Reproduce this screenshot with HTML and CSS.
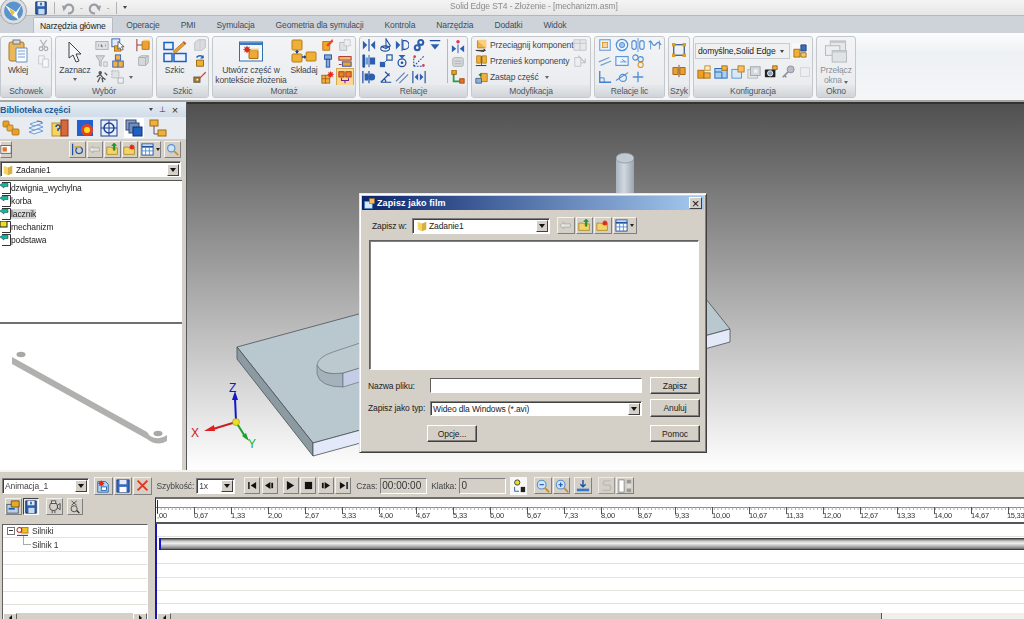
FILE: index.html
```html
<!DOCTYPE html>
<html lang="pl">
<head>
<meta charset="utf-8">
<title>Solid Edge ST4 - Złożenie - [mechanizm.asm]</title>
<link rel="stylesheet" href="styles.css">
</head>
<body>
<svg class="defs" aria-hidden="true">
<defs>
<symbol id="paste" viewBox="0 0 20 24"><rect x="1" y="3" width="15" height="19" rx="2" fill="#e8b85a" stroke="#a87a28"/><rect x="5" y="1" width="7" height="4" fill="#d8d8d8" stroke="#777"/><path d="M8 9h11v14H8z" fill="#f8fbff" stroke="#6f8fb8"/><path d="M10 12h7M10 15h7M10 18h7" stroke="#7aa0d0"/></symbol>
<symbol id="undo" viewBox="0 0 16 16"><path d="M4 9a5 5 0 1 1 4 5" fill="none" stroke="#9a9ea4" stroke-width="2.400"/><path d="M1 5l6 1-4 6z" fill="#9a9ea4"/></symbol>
<symbol id="cut" viewBox="0 0 16 16"><path d="M4 1l6 9M12 1L6 10" stroke="#b4b8bc" stroke-width="1.6" fill="none"/><circle cx="5" cy="12" r="2.3" fill="none" stroke="#a8acb0" stroke-width="1.5"/><circle cx="11" cy="12" r="2.3" fill="none" stroke="#a8acb0" stroke-width="1.5"/></symbol>
<symbol id="copy" viewBox="0 0 16 16"><path d="M2 1h7v10H2z" fill="#f2f3f4" stroke="#c0c4c8"/><path d="M7 5h7v10H7z" fill="#f6f7f8" stroke="#c0c4c8"/></symbol>
<symbol id="cursor" viewBox="0 0 14 22"><path d="M1 1v16l4-3 3 7 3-1-3-7h5z" fill="#f4f6f8" stroke="#3c4248"/></symbol>
<symbol id="selbox" viewBox="0 0 16 16"><rect x="1" y="4" width="14" height="9" fill="#dfe2e5" stroke="#a8acb0"/><path d="M4 7v3M7 7v3h2M12 7v3" stroke="#a0a4a8"/></symbol>
<symbol id="selcur" viewBox="0 0 16 16"><rect x="1" y="1" width="9" height="9" fill="#dfeaf8" stroke="#2f5faf"/><rect x="4" y="9" width="7" height="6" fill="#f0a828" stroke="#a86c10"/><path d="M8 4v9l2-2 2 3 2-1-2-3h3z" fill="#fff" stroke="#333" stroke-width=".8"/></symbol>
<symbol id="tee" viewBox="0 0 16 16"><path d="M1 1v14M1 8h6" stroke="#a04040" stroke-width="1.2"/><path d="M7 4h8v9H7z" fill="#f0a030" stroke="#b07010"/><path d="M7 4l2-2h7l-1 2z" fill="#f8cc70"/></symbol>
<symbol id="filter" viewBox="0 0 16 16"><path d="M1 2h10L7 8v6l-2-1V8z" fill="#d4d7da" stroke="#a6aaae"/><rect x="10" y="9" width="4" height="5" fill="#e4e6e8" stroke="#b4b8bc"/></symbol>
<symbol id="stack" viewBox="0 0 16 16"><rect x="5" y="1" width="6" height="6" fill="#f4b040" stroke="#2f5faf"/><rect x="2" y="8" width="12" height="7" fill="#f4b040" stroke="#2f5faf"/><path d="M8 8v7" stroke="#2f5faf"/></symbol>
<symbol id="grycube" viewBox="0 0 16 16"><path d="M3 4l3-2h8v8l-3 3H3z" fill="#d6d9dc" stroke="#a8acb0"/><path d="M3 4h8v9M11 4l3-2" fill="none" stroke="#a8acb0"/></symbol>
<symbol id="run" viewBox="0 0 16 16"><circle cx="6" cy="3" r="2" fill="#555"/><path d="M2 8l4-3 3 4 3 2M6 8l-3 6M8 9l1 5M11 3l3 3" stroke="#555" stroke-width="1.5" fill="none"/></symbol>
<symbol id="grybox" viewBox="0 0 16 16"><rect x="1" y="1" width="8" height="8" fill="#e0e3e6" stroke="#a8acb0" stroke-dasharray="2 1"/><rect x="8" y="9" width="6" height="6" fill="#f0f2f4" stroke="#a8acb0"/></symbol>
<symbol id="sketch" viewBox="0 0 24 22"><rect x="1" y="2" width="9" height="7" fill="#eaf2fc" stroke="#1c5fc0" stroke-width="1.5"/><rect x="1" y="13" width="8" height="8" fill="#eaf2fc" stroke="#1c5fc0" stroke-width="1.5"/><rect x="11" y="13" width="12" height="8" fill="#eaf2fc" stroke="#1c5fc0" stroke-width="1.5"/><path d="M10 11L21 1l2 2L12 13z" fill="#e8a030" stroke="#a06010" stroke-width=".6"/><path d="M21 1l2 2-1 1-2-2z" fill="#d04040"/></symbol>
<symbol id="grypart" viewBox="0 0 16 16"><path d="M2 5l4-3h8v9l-4 3H2z" fill="#dadde0" stroke="#b8bcc0"/><path d="M8 2v10" stroke="#c4c8cc"/></symbol>
<symbol id="sk2" viewBox="0 0 16 16"><path d="M4 7h8v7H4z" fill="#f0b030" stroke="#906010"/><path d="M4 4a5 5 0 0 1 8 0" fill="none" stroke="#1c5fc0" stroke-width="1.6"/><path d="M12 1v4H8z" fill="#1c5fc0"/></symbol>
<symbol id="sk3" viewBox="0 0 16 16"><rect x="1" y="8" width="7" height="6" fill="#b08028" stroke="#555"/><path d="M7 9l7-7 1 1-7 7z" fill="#d84040"/><circle cx="5" cy="11" r="1" fill="#fff"/></symbol>
<symbol id="window" viewBox="0 0 24 20"><rect x=".5" y=".5" width="23" height="19" fill="#f4f8fc" stroke="#2f6fb0"/><rect x="1" y="1" width="22" height="2.5" fill="#3a78c0"/><path d="M10 9h9v8h-9z" fill="#f0a830" stroke="#a87010"/><path d="M10 9l2-2h8l-1 2z" fill="#f8d080"/><path d="M8 4l1 2 2-1-1 2 2 1-2 1 1 2-2-1-1 2-1-2-2 1 1-2-2-1 2-1-1-2 2 1z" fill="#e02818"/></symbol>
<symbol id="assemble" viewBox="0 0 26 24"><rect x="1" y="1" width="10" height="10" rx="1" fill="#f0b038" stroke="#b87c10"/><rect x="1" y="15" width="10" height="8" rx="1" fill="#f0b038" stroke="#b87c10"/><rect x="15" y="13" width="10" height="9" rx="1" fill="#f0b038" stroke="#b87c10"/><path d="M6 11v3M11 18h4" stroke="#1c3f90" stroke-width="1.5"/><path d="M4 12h4l-2 3zM13 16v4l2-2z" fill="#1c3f90"/></symbol>
<symbol id="m1" viewBox="0 0 16 16"><path d="M2 4h8v10H2z" fill="#f0a828" stroke="#b87010"/><path d="M6 8l7-7 1 3-6 6z" fill="#e84828"/></symbol>
<symbol id="m2" viewBox="0 0 16 16"><rect x="2" y="5" width="8" height="9" fill="#e0e3e6" stroke="#b4b8bc"/><rect x="7" y="2" width="7" height="7" fill="#eceef0" stroke="#b4b8bc" stroke-dasharray="2 1"/></symbol>
<symbol id="m3" viewBox="0 0 16 16"><rect x="4" y="1" width="8" height="5" fill="#88a8d8" stroke="#1c4fa0"/><rect x="6" y="6" width="4" height="9" fill="#88a8d8" stroke="#1c4fa0"/></symbol>
<symbol id="m4" viewBox="0 0 16 16"><rect x="1" y="3" width="14" height="4" fill="#f0c060" stroke="#a02020"/><rect x="5" y="9" width="10" height="5" fill="#f0a030" stroke="#1c4fa0"/><path d="M1 12h3" stroke="#a02020"/></symbol>
<symbol id="m5" viewBox="0 0 16 16"><rect x="1" y="6" width="9" height="9" fill="#f0b040" stroke="#a06010"/><path d="M1 10h9M5 6v9" stroke="#a06010"/><path d="M11 1l1 2 2-1-1 2 2 1-2 1 1 2-2-1-1 2-1-2-2 1 1-2-2-1 2-1-1-2 2 1z" fill="#e82818"/></symbol>
<symbol id="m6" viewBox="0 0 16 16"><rect x="1" y="2" width="6" height="6" fill="#e88030" stroke="#a03010"/><rect x="9" y="2" width="6" height="6" fill="#e88030" stroke="#a03010"/><path d="M4 9v3h8V9M8 12v3" fill="none" stroke="#702090" stroke-width="1.2"/></symbol>
<symbol id="r1" viewBox="0 0 16 16"><path d="M8 1v14" stroke="#1c4fa0" stroke-width="1.3"/><path d="M1 3l5 5-5 5zM15 3l-5 5 5 5z" fill="#2c5fb0"/></symbol>
<symbol id="r2" viewBox="0 0 16 16"><path d="M8 1v11l5-3zM8 12l-5-2" fill="none" stroke="#1c4fa0" stroke-width="1.2"/><ellipse cx="7" cy="12" rx="5" ry="3" fill="none" stroke="#1c4fa0" stroke-width="1.2"/></symbol>
<symbol id="r3" viewBox="0 0 16 16"><path d="M1 3l5 5-5 5z" fill="#2c5fb0"/><path d="M8 1v14" stroke="#1c4fa0"/><path d="M9 3h2a5 5 0 0 1 0 10H9z" fill="none" stroke="#1c4fa0" stroke-width="1.3"/></symbol>
<symbol id="r4" viewBox="0 0 16 16"><circle cx="10" cy="5" r="4" fill="#2c5fb0"/><circle cx="6" cy="11" r="4" fill="#2c5fb0"/><circle cx="10" cy="5" r="1.5" fill="#fff"/><circle cx="6" cy="11" r="1.5" fill="#fff"/></symbol>
<symbol id="r5" viewBox="0 0 16 16"><path d="M2 3h12" stroke="#1c4fa0" stroke-width="1.5"/><path d="M3 7h10l-5 6z" fill="#2c5fb0"/></symbol>
<symbol id="r6" viewBox="0 0 16 16"><path d="M1 1h2v14H1zM8 1v14" fill="#1c4fa0" stroke="#1c4fa0"/><rect x="9" y="4" width="6" height="8" fill="#2c5fb0"/><rect x="4" y="4" width="3" height="8" fill="#6f9fd8"/></symbol>
<symbol id="r7" viewBox="0 0 16 16"><rect x="1" y="9" width="6" height="6" fill="#2c5fb0"/><rect x="9" y="1" width="6" height="6" fill="none" stroke="#1c4fa0" stroke-width="1.3"/><path d="M7 9l2-2" stroke="#1c4fa0"/></symbol>
<symbol id="r8" viewBox="0 0 16 16"><path d="M4 1h8L8 5z" fill="#2c5fb0"/><circle cx="8" cy="10" r="4.5" fill="none" stroke="#1c4fa0" stroke-width="1.4"/><circle cx="8" cy="10" r="1.5" fill="#1c4fa0"/></symbol>
<symbol id="r9" viewBox="0 0 16 16"><path d="M2 14L14 2M2 14V4M2 14h11" stroke="#1c4fa0" stroke-dasharray="2 1.5" fill="none" stroke-width="1.2"/><circle cx="3" cy="3" r="1.5" fill="#e03060"/><circle cx="13" cy="13" r="1.5" fill="#e03060"/></symbol>
<symbol id="r10" viewBox="0 0 16 16"><path d="M1 1v14M8 1v14" stroke="#1c4fa0" stroke-width="1.4"/><circle cx="11" cy="8" r="4" fill="#2c5fb0"/><rect x="3" y="4" width="4" height="8" fill="#2c5fb0"/></symbol>
<symbol id="r11" viewBox="0 0 16 16"><path d="M2 14h12M2 14L12 4M8 14a6 6 0 0 0-2-4M7 2l5 5" stroke="#1c4fa0" stroke-width="1.3" fill="none"/></symbol>
<symbol id="r12" viewBox="0 0 16 16"><path d="M1 13L11 3M5 15L15 5" stroke="#5c7fb8" stroke-width="1.3"/></symbol>
<symbol id="r13" viewBox="0 0 16 16"><path d="M1 1v14M15 1v14" stroke="#1c4fa0" stroke-width="1.3"/><path d="M7 4v8L3 8zM9 4v8l4-4z" fill="#2c5fb0"/></symbol>
<symbol id="r14" viewBox="0 0 16 16"><circle cx="8" cy="2" r="2" fill="#e83058"/><path d="M8 5v10" stroke="#1c4fa0"/><path d="M1 6l5 4-5 4zM15 6l-5 4 5 4z" fill="#2c5fb0"/></symbol>
<symbol id="r15" viewBox="0 0 16 16"><rect x="2" y="3" width="12" height="10" rx="2" fill="#d6d9dc" stroke="#a8acb0"/><path d="M4 7h8M4 10h8" stroke="#a8acb0"/></symbol>
<symbol id="r16" viewBox="0 0 16 16"><path d="M3 3v10h7" fill="none" stroke="#20a040" stroke-width="2"/><rect x="1" y="0" width="5" height="5" fill="#e8a028" stroke="#906010"/><rect x="10" y="10" width="5" height="5" fill="#e87028" stroke="#a04010"/></symbol>
<symbol id="drag" viewBox="0 0 16 16"><path d="M3 2h10v9H3z" fill="#eeb040" stroke="#b87c10"/><path d="M3 2l2-1h9v9l-1 1z" fill="#f8d080"/><path d="M1 14h12l-2-1.500v3z" fill="#333" stroke="#333"/></symbol>
<symbol id="move" viewBox="0 0 16 16"><path d="M2 1h5v9H2zM9 1h5v9H9z" fill="#eeb040" stroke="#b87c10"/><path d="M1 13h13" stroke="#333" stroke-width="1.2"/><path d="M8 1v12" stroke="#a03010"/></symbol>
<symbol id="repl" viewBox="0 0 16 16"><path d="M7 3h8v10H7z" fill="#eeb040" stroke="#a87010"/><path d="M1 9h7v6H1z" fill="#8ab0d8" stroke="#3c5a80"/><path d="M4 5l4-3v5z" fill="#208030"/></symbol>
<symbol id="grya" viewBox="0 0 16 16"><path d="M1 2h14v12H1z" fill="#e6e8ea" stroke="#c0c4c8"/><path d="M1 6h14M8 2v12" stroke="#c0c4c8"/></symbol>
<symbol id="gryb" viewBox="0 0 16 16"><path d="M2 4h7v10H2z" fill="#eceef0" stroke="#c0c4c8"/><path d="M6 2l8 8M14 5v5H9" fill="none" stroke="#c0c4c8" stroke-width="1.3"/></symbol>
<symbol id="l1" viewBox="0 0 16 16"><rect x="2" y="2" width="12" height="12" fill="#f0f6fc" stroke="#6fa0d8" stroke-width="1.3"/><rect x="5" y="5" width="6" height="6" fill="#f4d8a0" stroke="#d89028"/></symbol>
<symbol id="l2" viewBox="0 0 16 16"><circle cx="8" cy="8" r="6.500" fill="#eaf3fc" stroke="#4f8fd8" stroke-width="1.4"/><circle cx="8" cy="8" r="3" fill="#a0c4ec" stroke="#4f8fd8"/></symbol>
<symbol id="l3" viewBox="0 0 16 16"><path d="M8 0v16" stroke="#4f8fd8"/><rect x="1" y="3" width="5" height="10" rx="2.500" fill="none" stroke="#4f8fd8" stroke-width="1.3"/><rect x="10" y="3" width="5" height="10" rx="2.500" fill="none" stroke="#4f8fd8" stroke-width="1.3"/></symbol>
<symbol id="l4" viewBox="0 0 16 16"><path d="M1 5c3-5 4 6 7 3s4-5 7 0" fill="none" stroke="#4f8fd8" stroke-width="1.4"/><path d="M3 3v10M13 3v10" stroke="#4f8fd8"/></symbol>
<symbol id="l5" viewBox="0 0 16 16"><path d="M1 9L13 4M3 13L15 8" stroke="#6fa0d8" stroke-width="1.4"/></symbol>
<symbol id="l6" viewBox="0 0 16 16"><rect x="1" y="3" width="14" height="10" fill="#eef5fc" stroke="#4f8fd8" stroke-width="1.2"/><path d="M6 9h7M8 6l4 3" stroke="#4f8fd8"/></symbol>
<symbol id="l7" viewBox="0 0 16 16"><circle cx="5" cy="4" r="3" fill="none" stroke="#4f8fd8" stroke-width="1.2"/><circle cx="11" cy="6" r="3" fill="none" stroke="#4f8fd8" stroke-width="1.2"/><circle cx="11" cy="12.500" r="3" fill="none" stroke="#d89028" stroke-width="1.2"/></symbol>
<symbol id="l8" viewBox="0 0 16 16"><path d="M2 1v13h13" fill="none" stroke="#3f7fd0" stroke-width="1.5"/><path d="M2 9h5v5" fill="none" stroke="#3f7fd0"/></symbol>
<symbol id="l9" viewBox="0 0 16 16"><circle cx="9" cy="9" r="4" fill="none" stroke="#4f8fd8" stroke-width="1.3"/><path d="M1 12L15 3" stroke="#4f8fd8" stroke-width="1.3"/></symbol>
<symbol id="l10" viewBox="0 0 16 16"><path d="M8 2v12M2 8h12" stroke="#4f8fd8" stroke-width="1.5"/></symbol>
<symbol id="pat1" viewBox="0 0 16 16"><rect x="2" y="2" width="12" height="12" fill="none" stroke="#2a4a80" stroke-width="1.300"/><rect x="0" y="0" width="4" height="4" fill="#d8a020"/><rect x="12" y="0" width="4" height="4" fill="#d8a020"/><rect x="0" y="12" width="4" height="4" fill="#d8a020"/><rect x="12" y="12" width="4" height="4" fill="#d8a020"/></symbol>
<symbol id="pat2" viewBox="0 0 16 16"><path d="M8 1v14" stroke="#804020"/><path d="M1 4h6v8H1zM9 4h6v8H9z" fill="#e8a030" stroke="#a06010"/></symbol>
<symbol id="c0" viewBox="0 0 16 16"><path d="M1 6h7v9H1z" fill="#f0b038" stroke="#a06810"/><path d="M9 1h6v7H9z" fill="#3a6fb8" stroke="#1c3f80"/><path d="M9 10h6v5H9z" fill="#f0c868" stroke="#a06810"/></symbol>
<symbol id="c1" viewBox="0 0 16 16"><rect x="1" y="6" width="7" height="9" fill="#f0a020" stroke="#a86810"/><rect x="8" y="9" width="7" height="6" fill="#f0b040" stroke="#a86810"/><rect x="9" y="1" width="6" height="5" fill="#fff0c0" stroke="#c08820"/></symbol>
<symbol id="c2" viewBox="0 0 16 16"><rect x="1" y="4" width="14" height="11" fill="#a8d0f0" stroke="#2060a8"/><rect x="9" y="1" width="6" height="5" fill="#f0b840" stroke="#a06810"/><path d="M1 8h8v7" stroke="#2060a8" fill="none"/></symbol>
<symbol id="c3" viewBox="0 0 16 16"><rect x="1" y="5" width="11" height="10" fill="#d8e8f8" stroke="#5090d0"/><rect x="8" y="1" width="7" height="7" fill="#f8c060" stroke="#b07818"/></symbol>
<symbol id="c4" viewBox="0 0 16 16"><rect x="1" y="5" width="11" height="10" fill="#e4e6e8" stroke="#b0b4b8"/><rect x="4" y="2" width="11" height="10" fill="#d4d8dc" stroke="#a0a4a8"/><rect x="8" y="5" width="4" height="4" fill="#f0f2f4"/></symbol>
<symbol id="c5" viewBox="0 0 16 16"><rect x="1" y="5" width="12" height="9" rx="1" fill="#222"/><circle cx="7" cy="9.500" r="3" fill="#8aa4c0" stroke="#fff"/><rect x="10" y="1" width="5" height="4" fill="#f0b040" stroke="#906010"/></symbol>
<symbol id="c6" viewBox="0 0 16 16"><circle cx="11" cy="5" r="4" fill="#b8bcc4" stroke="#8a8e98"/><path d="M8 8l-6 6M4 12l2 2" stroke="#8a8e98" stroke-width="2"/></symbol>
<symbol id="c7" viewBox="0 0 16 16"><rect x="3" y="3" width="10" height="10" fill="#eceef0" stroke="#d0d3d6"/></symbol>
<symbol id="winsw" viewBox="0 0 24 24"><rect x="6" y="1" width="16" height="13" fill="#e6e8ea" stroke="#b4b8bc"/><rect x="1" y="6" width="15" height="10" fill="#eceef0" stroke="#b4b8bc"/><rect x="8" y="11" width="15" height="12" fill="#e0e3e6" stroke="#b4b8bc"/><path d="M6 1h16v2H6zM8 11h15v2H8z" fill="#c4c8cc"/></symbol>
<symbol id="folder" viewBox="0 0 12 14"><path d="M1 2l5 2v9l-5-2z" fill="#f4d468"/><path d="M6 4l5-2v9l-5 2z" fill="#d8b040"/></symbol>
<symbol id="doc" viewBox="0 0 11 12"><path d="M2 .5h8.500v11H2" fill="#fff" stroke="#333"/><path d="M0 3l4-3v1.500h4v3H4V6z" fill="#10b8a8" stroke="#043"  stroke-width=".5"/></symbol>
<symbol id="docasm" viewBox="0 0 11 12"><path d="M2 .5h8.500v11H2" fill="#fff" stroke="#333"/><rect x="0" y="0" width="7" height="6" fill="#e8e020" stroke="#222"/></symbol>
<symbol id="p1" viewBox="0 0 18 18"><rect x="1" y="2" width="6" height="6" rx="1" fill="#e8a028" stroke="#a87018" stroke-width=".8"/><rect x="5" y="6" width="6" height="6" rx="1" fill="#eeb040" stroke="#a87018" stroke-width=".8"/><rect x="10" y="10" width="7" height="6" rx="1" fill="#e8a028" stroke="#a87018" stroke-width=".8"/></symbol>
<symbol id="p2" viewBox="0 0 18 18"><path d="M3 5l9-3 4 2-9 3zM2 9l9-3 5 2-9 3zM2 13l9-3 5 2-9 3z" fill="#e8f0f8" stroke="#6fa0d8"/><path d="M10 2l5 1" stroke="#e04040"/></symbol>
<symbol id="p3" viewBox="0 0 18 18"><rect x="1" y="4" width="9" height="13" fill="#f4d468" stroke="#c09020"/><rect x="10" y="1" width="7" height="16" fill="#d86840" stroke="#903818"/><path d="M5 8a2 2 0 1 1 2 2v2" fill="none" stroke="#2050a0" stroke-width="1.5"/></symbol>
<symbol id="p4" viewBox="0 0 18 18"><rect x="1" y="1" width="16" height="16" fill="#2060d0"/><circle cx="11" cy="11" r="6" fill="#e84020"/><circle cx="11" cy="11" r="3" fill="#f8e020"/></symbol>
<symbol id="p5" viewBox="0 0 18 18"><rect x="1" y="1" width="16" height="16" fill="#e8f0fc" stroke="#1c3f90"/><circle cx="9" cy="9" r="5" fill="none" stroke="#1c3f90" stroke-width="1.5"/><path d="M9 1v16M1 9h16" stroke="#1c3f90"/></symbol>
<symbol id="p6" viewBox="0 0 18 18"><rect x="1" y="1" width="10" height="10" fill="#88a0c8" stroke="#304870"/><rect x="4" y="4" width="10" height="10" fill="#7090c0" stroke="#304870"/><rect x="8" y="8" width="9" height="9" fill="#2060c0" stroke="#103070"/></symbol>
<symbol id="p7" viewBox="0 0 18 18"><rect x="1" y="1" width="8" height="6" fill="#f0b040" stroke="#a06810"/><path d="M5 7v8h4" fill="none" stroke="#555"/><rect x="9" y="11" width="8" height="6" fill="#f0b040" stroke="#a06810"/></symbol>
<symbol id="fnd" viewBox="0 0 16 16"><path d="M2 1v14" stroke="#1c4fa0" stroke-width="1.500"/><circle cx="10" cy="9" r="4" fill="none" stroke="#1c4fa0" stroke-width="1.500"/><path d="M4 5h8" stroke="#e0a020" stroke-width="2"/></symbol>
<symbol id="back" viewBox="0 0 16 16"><path d="M1 8l5-4v2h8v4H6v2z" fill="#e4e4e0" stroke="#a8a8a4"/></symbol>
<symbol id="fup" viewBox="0 0 16 16"><path d="M1 5h5l1 1h7v8H1z" fill="#f4d468" stroke="#a88820"/><path d="M9 9V3h-2l3-3 3 3h-2v6z" fill="#20a030" stroke="#106018" stroke-width=".5"/></symbol>
<symbol id="fnew" viewBox="0 0 16 16"><path d="M1 5h5l1 1h7v8H1z" fill="#f4d468" stroke="#a88820"/><path d="M11 1l1 2 2-1-1 2 2 1-2 1 1 2-2-1-1 2-1-2-2 1 1-2-2-1 2-1-1-2 2 1z" fill="#e02818"/></symbol>
<symbol id="views" viewBox="0 0 14 14"><rect x="1" y="1" width="12" height="12" fill="#fff" stroke="#1c4fa0"/><path d="M1 4h12" stroke="#1c4fa0" stroke-width="2"/><path d="M5 4v9M9 4v9M1 8.500h12" stroke="#4f8fd8"/></symbol>
<symbol id="search" viewBox="0 0 16 16"><circle cx="6.500" cy="6.500" r="4.500" fill="#cfe4f8" stroke="#5a8fc8" stroke-width="1.400"/><path d="M10 10l5 5" stroke="#c89030" stroke-width="2.200"/></symbol>
<symbol id="zin" viewBox="0 0 16 16"><circle cx="6.500" cy="6.500" r="5" fill="#cfe4f8" stroke="#5a8fc8" stroke-width="1.200"/><path d="M10 10l5 5" stroke="#c89030" stroke-width="2.200"/><path d="M4 6.500h5M6.500 4v5" stroke="#1c4fa0" stroke-width="1.200"/></symbol>
<symbol id="zout" viewBox="0 0 16 16"><circle cx="6.500" cy="6.500" r="5" fill="#cfe4f8" stroke="#5a8fc8" stroke-width="1.200"/><path d="M10 10l5 5" stroke="#c89030" stroke-width="2.200"/><path d="M4 6.500h5" stroke="#1c4fa0" stroke-width="1.200"/></symbol>
<symbol id="lib" viewBox="0 0 14 14"><rect x="1" y="3" width="12" height="9" fill="#fff" stroke="#555"/><rect x="3" y="5" width="5" height="5" fill="#e87030"/></symbol>
<symbol id="anew" viewBox="0 0 16 16"><path d="M2 3h9l3 3v9H2z" fill="#b8d4f0" stroke="#2060a8"/><path d="M6 1l1 2 2-1-1 2 2 1-2 1 1 2-2-1-1 2-1-2-2 1 1-2-2-1 2-1-1-2 2 1z" fill="#e02818"/><rect x="6" y="9" width="6" height="4" fill="#fff" stroke="#2060a8"/></symbol>
<symbol id="fsave" viewBox="0 0 16 16"><path d="M1 1h14v14H1z" fill="#3868c0" stroke="#1c3f80"/><rect x="4" y="1" width="8" height="5" fill="#e4ecf8"/><rect x="4" y="9" width="8" height="6" fill="#fff"/></symbol>
<symbol id="x" viewBox="0 0 16 16"><path d="M2 2l12 12M14 2L2 14" stroke="#e03820" stroke-width="2.400"/></symbol>
<symbol id="t1" viewBox="0 0 14 10"><path d="M3 1v8" stroke="#111" stroke-width="1.600"/><path d="M11 1v8L5 5z" fill="#111"/></symbol>
<symbol id="t2" viewBox="0 0 14 10"><path d="M8 1v8L2 5z" fill="#111"/><path d="M10 2v6" stroke="#111" stroke-width="2"/></symbol>
<symbol id="t3" viewBox="0 0 14 10"><path d="M3 0v10l8-5z" fill="#111"/></symbol>
<symbol id="t4" viewBox="0 0 14 10"><rect x="3" y="1" width="8" height="8" fill="#111"/></symbol>
<symbol id="t5" viewBox="0 0 14 10"><path d="M6 1v8l6-4z" fill="#111"/><path d="M4 2v6" stroke="#111" stroke-width="2"/></symbol>
<symbol id="t6" viewBox="0 0 14 10"><path d="M11 1v8" stroke="#111" stroke-width="1.600"/><path d="M3 1v8l6-4z" fill="#111"/></symbol>
<symbol id="key" viewBox="0 0 16 16"><circle cx="6" cy="4" r="3" fill="#e8e020" stroke="#333"/><path d="M3 9v5h5" fill="none" stroke="#1c4fa0"/><rect x="10" y="9" width="5" height="6" fill="#222"/></symbol>
<symbol id="pen" viewBox="0 0 16 16"><path d="M8 1v8M5 6l3 3 3-3" fill="none" stroke="#1c4fa0" stroke-width="1.600"/><path d="M1 11h14v3H1z" fill="#3878c8"/></symbol>
<symbol id="curve" viewBox="0 0 16 16"><path d="M12 2H6C3 2 3 7 6 7h4c3 0 3 6 0 6H3" fill="none" stroke="#b0b0ac" stroke-width="1.300"/></symbol>
<symbol id="split" viewBox="0 0 16 16"><rect x="1" y="1" width="6" height="14" fill="#fff" stroke="#888"/><rect x="10" y="1" width="5" height="4" fill="#999"/><rect x="10" y="6" width="5" height="4" fill="#ddd"/><rect x="10" y="11" width="5" height="4" fill="#999"/></symbol>
<symbol id="ad1" viewBox="0 0 16 16"><rect x="1" y="5" width="13" height="10" fill="#b8d0e8" stroke="#505860"/><path d="M6 1h9v7H6z" fill="#e8a828" stroke="#6a5010"/><rect x="3" y="9" width="7" height="2" fill="#2060a8"/></symbol>
<symbol id="ad2" viewBox="0 0 16 16"><path d="M2 1h12v14H2z" fill="#2f5fb0" stroke="#102c60"/><rect x="4" y="1" width="8" height="5" fill="#dce8f4"/><rect x="5" y="9" width="7" height="6" fill="#c8dcf0"/><rect x="7" y="2" width="2" height="3" fill="#2f5fb0"/></symbol>
<symbol id="ad3" viewBox="0 0 16 16"><rect x="3" y="3" width="9" height="9" rx="4" fill="none" stroke="#444"/><rect x="5" y="1" width="5" height="3" fill="#e8e8e4" stroke="#444"/><path d="M12 6l3-2v7l-3-2z" fill="none" stroke="#444"/><path d="M6 12v3M9 12v3" stroke="#444"/></symbol>
<symbol id="ad4" viewBox="0 0 16 16"><path d="M4 1l6 5M10 1L4 6" stroke="#444"/><circle cx="7" cy="10" r="3.500" fill="none" stroke="#444"/><path d="M10 12l3 3" stroke="#333" stroke-width="1.600"/></symbol>
<symbol id="motor" viewBox="0 0 16 14"><rect x="7" y="2" width="8" height="7" fill="#f0c020" stroke="#a07010"/><circle cx="4" cy="5" r="3" fill="none" stroke="#c02020" stroke-width="1.300"/><path d="M1 12h14" stroke="#902090" stroke-width="1.500"/></symbol>
</defs>
</svg>

<div class="app">
  <div class="logo">
    <svg viewBox="0 0 27 27"><circle cx="13.500" cy="11" r="13" fill="#dcdee0" stroke="#a4a6aa"/><circle cx="13.500" cy="11" r="9.500" fill="#5a94cc"/><path d="M5 5l11 7 6-8-5 10 2 6-7-5z" fill="#fff"/><path d="M9 8l6 4-3 4z" fill="#e8c040"/></svg>
  </div>
  <header class="titlebar">
    <div class="qat">
      <svg class="i14"><use href="#ad2"/></svg>
      <span class="qsep"></span>
      <svg class="i14"><use href="#undo"/></svg>
      <span class="qdash">-</span>
      <svg class="i14 flip"><use href="#undo"/></svg>
      <span class="qdash">-</span>
      <span class="qsep"></span>
      <span class="caret dark"></span>
    </div>
    <div class="title">Solid Edge ST4 - Złożenie - [mechanizm.asm]</div>
  </header>
  <nav class="tabs">
    <span class="tab active">Narzędzia główne</span>
    <span class="tab">Operacje</span>
    <span class="tab">PMI</span>
    <span class="tab">Symulacja</span>
    <span class="tab">Geometria dla symulacji</span>
    <span class="tab">Kontrola</span>
    <span class="tab">Narzędzia</span>
    <span class="tab">Dodatki</span>
    <span class="tab">Widok</span>
  </nav>

  <section class="ribbon">
    <div class="grp w52">
      <div class="body">
        <div class="big bw36"><svg class="ic20"><use href="#paste"/></svg><span>Wklej</span></div>
        <div class="sm sm1"><svg class="i13"><use href="#cut"/></svg><svg class="i13"><use href="#copy"/></svg></div>
      </div>
      <div class="cap">Schowek</div>
    </div>
    <div class="grp w98">
      <div class="body">
        <div class="big bw38"><svg class="ic-cur"><use href="#cursor"/></svg><span>Zaznacz</span><span class="caret"></span></div>
        <div class="sm sm-wyb">
          <svg class="i14"><use href="#selbox"/></svg><svg class="i14"><use href="#selcur"/></svg><span></span><svg class="i14"><use href="#tee"/></svg>
          <svg class="i14"><use href="#filter"/></svg><svg class="i14"><use href="#stack"/></svg><span></span><svg class="i14"><use href="#grycube"/></svg>
          <svg class="i14"><use href="#run"/></svg><svg class="i14"><use href="#grybox"/></svg><span class="caret"></span><span></span>
        </div>
      </div>
      <div class="cap">Wybór</div>
    </div>
    <div class="grp w53">
      <div class="body">
        <div class="big bw36"><svg class="ic24"><use href="#sketch"/></svg><span>Szkic</span></div>
        <div class="sm sm1"><svg class="i14"><use href="#grypart"/></svg><svg class="i14"><use href="#sk2"/></svg><svg class="i14"><use href="#sk3"/></svg></div>
      </div>
      <div class="cap">Szkic</div>
    </div>
    <div class="grp w144">
      <div class="body">
        <div class="big bw76"><svg class="ic24"><use href="#window"/></svg><span>Utwórz część w</span><span>kontekście złożenia</span></div>
        <div class="big bw30"><svg class="ic26"><use href="#assemble"/></svg><span>Składaj</span></div>
        <div class="sm sm-mon">
          <svg class="i14"><use href="#m1"/></svg><svg class="i14"><use href="#m2"/></svg>
          <svg class="i14"><use href="#m3"/></svg><svg class="i14"><use href="#m4"/></svg>
          <svg class="i14"><use href="#m5"/></svg><span class="hot"><svg class="i14"><use href="#m6"/></svg></span>
        </div>
      </div>
      <div class="cap">Montaż</div>
    </div>
    <div class="grp w109">
      <div class="body">
        <div class="sm sm-rel">
          <svg class="i14"><use href="#r1"/></svg><svg class="i14"><use href="#r2"/></svg><svg class="i14"><use href="#r3"/></svg><svg class="i14"><use href="#r4"/></svg><svg class="i14"><use href="#r5"/></svg>
          <svg class="i14"><use href="#r6"/></svg><svg class="i14"><use href="#r7"/></svg><svg class="i14"><use href="#r8"/></svg><svg class="i14"><use href="#r9"/></svg><span></span>
          <svg class="i14"><use href="#r10"/></svg><svg class="i14"><use href="#r11"/></svg><svg class="i14"><use href="#r12"/></svg><svg class="i14"><use href="#r13"/></svg><span></span>
        </div>
        <div class="sm sm1 vsep"><svg class="i14"><use href="#r14"/></svg><svg class="i14"><use href="#r15"/></svg><svg class="i14"><use href="#r16"/></svg></div>
      </div>
      <div class="cap">Relacje</div>
    </div>
    <div class="grp w120">
      <div class="body">
        <div class="lst">
          <div class="li"><svg class="i13"><use href="#drag"/></svg><span>Przeciągnij komponent</span></div>
          <div class="li"><svg class="i13"><use href="#move"/></svg><span>Przenieś komponenty</span></div>
          <div class="li"><svg class="i13"><use href="#repl"/></svg><span>Zastąp część</span><span class="caret"></span></div>
        </div>
        <div class="sm sm1"><svg class="i14"><use href="#grya"/></svg><svg class="i14"><use href="#gryb"/></svg></div>
      </div>
      <div class="cap">Modyfikacja</div>
    </div>
    <div class="grp w71">
      <div class="body">
        <div class="sm sm-lic">
          <svg class="i14"><use href="#l1"/></svg><svg class="i14"><use href="#l2"/></svg><svg class="i14"><use href="#l3"/></svg><svg class="i14"><use href="#l4"/></svg>
          <svg class="i14"><use href="#l5"/></svg><svg class="i14"><use href="#l6"/></svg><svg class="i14"><use href="#l7"/></svg><span></span>
          <svg class="i14"><use href="#l8"/></svg><svg class="i14"><use href="#l9"/></svg><svg class="i14"><use href="#l10"/></svg><span></span>
        </div>
      </div>
      <div class="cap">Relacje lic</div>
    </div>
    <div class="grp w22">
      <div class="body szyk"><svg class="i14"><use href="#pat1"/></svg><svg class="i14"><use href="#pat2"/></svg></div>
      <div class="cap">Szyk</div>
    </div>
    <div class="grp w120">
      <div class="conf">
        <div class="conf-top"><div class="rcombo"><span>domyślne,Solid Edge</span><span class="caret dark"></span></div><span class="rbtn"><svg class="i14"><use href="#c0"/></svg></span></div>
        <div class="conf-row">
          <svg class="i14"><use href="#c1"/></svg><svg class="i14"><use href="#c2"/></svg><svg class="i14"><use href="#c3"/></svg><svg class="i14"><use href="#c4"/></svg><svg class="i14"><use href="#c5"/></svg><svg class="i14"><use href="#c6"/></svg><svg class="i14"><use href="#c7"/></svg>
        </div>
      </div>
      <div class="cap">Konfiguracja</div>
    </div>
    <div class="grp w40">
      <div class="body"><div class="big bw38 dim"><svg class="ic24"><use href="#winsw"/></svg><span>Przełącz</span><span>okna <span class="caret inl"></span></span></div></div>
      <div class="cap">Okno</div>
    </div>
  </section>
  <div class="rule"></div>

  <main class="main">
    <aside class="side">
      <div class="side-head"><span class="side-title">Biblioteka części</span><span class="side-ctl"><span class="caret dark"></span><span class="pin">⊥</span><span class="closex">×</span></span></div>
      <div class="side-tabs">
        <svg class="i18"><use href="#p1"/></svg><svg class="i18"><use href="#p2"/></svg><svg class="i18"><use href="#p3"/></svg><svg class="i18"><use href="#p4"/></svg><svg class="i18"><use href="#p5"/></svg><span class="side-tab"><svg class="i18"><use href="#p6"/></svg></span><svg class="i18"><use href="#p7"/></svg>
      </div>
      <div class="side-tools">
        <span class="xbtn b12"><svg class="i12"><use href="#lib"/></svg></span>
        <span class="tgap"></span>
        <span class="xbtn b16"><svg class="i13"><use href="#fnd"/></svg></span>
        <span class="xbtn b16"><svg class="i13"><use href="#back"/></svg></span>
        <span class="xbtn b16"><svg class="i13"><use href="#fup"/></svg></span>
        <span class="xbtn b16"><svg class="i13"><use href="#fnew"/></svg></span>
        <span class="xbtn b22"><svg class="i13"><use href="#views"/></svg><span class="mini"></span></span>
        <span class="tgap2"></span>
        <span class="xbtn b16"><svg class="i13"><use href="#search"/></svg></span>
      </div>
      <div class="combo side-combo"><svg class="i12"><use href="#folder"/></svg><span class="combo-txt">Zadanie1</span><span class="arr"></span></div>
      <ul class="files">
        <li><svg class="fi"><use href="#doc"/></svg><span>dzwignia_wychylna</span></li>
        <li><svg class="fi"><use href="#doc"/></svg><span>korba</span></li>
        <li><svg class="fi"><use href="#doc"/></svg><span class="sel">lacznik</span></li>
        <li><svg class="fi"><use href="#docasm"/></svg><span>mechanizm</span></li>
        <li><svg class="fi"><use href="#doc"/></svg><span>podstawa</span></li>
      </ul>
      <div class="preview">
        <svg viewBox="0 322 182 146" width="182" height="146">
          <path d="M12 355v7l135 75q10 8 20 2v-6q-8 6-17 1l-3-4z" fill="#b0b0ae"/>
          <ellipse cx="21" cy="352.500" rx="4.500" ry="2.800" fill="#a8a8a6"/>
          <ellipse cx="158" cy="431.500" rx="4.500" ry="2.800" fill="#a8a8a6"/>
        </svg>
      </div>
    </aside>
    <div class="view">
      <svg class="scene" viewBox="187 102 837 368" width="837" height="368">
        <defs>
          <linearGradient id="pg" x1="0" x2="1"><stop offset="0" stop-color="#a8b4c0"/><stop offset=".45" stop-color="#d2d8e0"/><stop offset="1" stop-color="#9aa4b0"/></linearGradient>
        </defs>
        <path d="M237 347L654 234L730 329L313 443z" fill="#b9c8ce" stroke="#4a5258" stroke-width=".8"/>
        <path d="M237 347v12l76 97v-13z" fill="#8c9aa2" stroke="#4a5258" stroke-width=".8"/>
        <path d="M313 443L730 329v13L313 456z" fill="#e4e9fa" stroke="#4a5258" stroke-width=".8"/>
        <path d="M317 365v9q3 13 26 13v-14q-21 3-26-8z" fill="#a4b2bc" stroke="#5a646c" stroke-width=".6"/>
        <path d="M343 373l23-7v14l-23 7z" fill="#c4cce6" stroke="#5a646c" stroke-width=".6"/>
        <path d="M317 365q1-8 16-13l33-11v25l-23 7q-21 3-26-8z" fill="#bccad0" stroke="#5a646c" stroke-width=".6"/>
        <rect x="616" y="158" width="18" height="40" fill="url(#pg)"/>
        <ellipse cx="625" cy="158" rx="9" ry="5" fill="#c0cad2" stroke="#7a8690" stroke-width=".6"/>
        <path d="M236 421L235 398" stroke="#1018c8" stroke-width="2"/>
        <path d="M235 391l3 9h-6z" fill="#1018c8"/>
        <path d="M236 422L213 429" stroke="#c82020" stroke-width="2"/>
        <path d="M204 431l10-6 1 6z" fill="#e02020"/>
        <path d="M236 422L246 438" stroke="#20a030" stroke-width="2"/>
        <path d="M249 441l-7-5 4-3z" fill="#20a030"/>
        <circle cx="236" cy="422" r="3.500" fill="#e8e020" stroke="#808020" stroke-width=".5"/>
        <text x="229" y="392" class="ax az">Z</text>
        <text x="191" y="437" class="ax ax-x">X</text>
        <text x="248" y="448" class="ax ay">Y</text>
      </svg>

      <div class="dlg">
        <div class="dlg-title"><svg class="i11"><use href="#c3"/></svg><span class="dlg-name">Zapisz jako film</span><span class="dlg-x">×</span></div>
        <div class="dlg-body">
          <div class="dlg-top">
            <label class="lab-w">Zapisz w:</label>
            <div class="combo dlg-combo"><svg class="i12"><use href="#folder"/></svg><span class="combo-txt">Zadanie1</span><span class="arr"></span></div>
            <span class="xbtn b17"><svg class="i13"><use href="#back"/></svg></span>
            <span class="xbtn b17"><svg class="i13"><use href="#fup"/></svg></span>
            <span class="xbtn b17"><svg class="i13"><use href="#fnew"/></svg></span>
            <span class="xbtn b24"><svg class="i13"><use href="#views"/></svg><span class="mini"></span></span>
          </div>
          <div class="dlg-list"></div>
          <div class="dlg-row r-name">
            <label class="lab">Nazwa pliku:</label>
            <div class="field"></div>
            <button class="btn">Zapisz</button>
          </div>
          <div class="dlg-row r-type">
            <label class="lab">Zapisz jako typ:</label>
            <div class="combo type"><span class="combo-txt t2">Wideo dla Windows (*.avi)</span><span class="arr"></span></div>
            <button class="btn">Anuluj</button>
          </div>
          <div class="dlg-row r-opt">
            <button class="btn opt">Opcje...</button>
            <button class="btn">Pomoc</button>
          </div>
        </div>
      </div>
    </div>
  </main>

  <section class="bottom">
    <div class="tb">
      <div class="combo anim"><span class="combo-txt t3">Animacja_1</span><span class="arr"></span></div>
      <span class="xbtn b18 ml5"><svg class="i14"><use href="#anew"/></svg></span>
      <span class="xbtn b18"><svg class="i14"><use href="#fsave"/></svg></span>
      <span class="xbtn b18"><svg class="i13"><use href="#x"/></svg></span>
      <span class="tl ml5">Szybkość:</span>
      <div class="combo speed"><span class="combo-txt t3">1x</span><span class="arr"></span></div>
      <span class="tg ml9">
        <span class="xbtn b15"><svg class="tr"><use href="#t1"/></svg></span>
        <span class="xbtn b15"><svg class="tr"><use href="#t2"/></svg></span>
      </span>
      <span class="tg ml5">
        <span class="xbtn b15"><svg class="tr"><use href="#t3"/></svg></span>
        <span class="xbtn b15"><svg class="tr"><use href="#t4"/></svg></span>
        <span class="xbtn b15"><svg class="tr"><use href="#t5"/></svg></span>
        <span class="xbtn b15"><svg class="tr"><use href="#t6"/></svg></span>
      </span>
      <span class="tl ml5">Czas:</span>
      <div class="ro w48">00:00:00</div>
      <span class="tl ml4">Klatka:</span>
      <div class="ro w48">0</div>
      <span class="rbtn2 ml4"><svg class="i14"><use href="#key"/></svg></span>
      <span class="xbtn b17 ml7"><svg class="i14"><use href="#zout"/></svg></span>
      <span class="xbtn b17"><svg class="i14"><use href="#zin"/></svg></span>
      <span class="xbtn b17 ml4"><svg class="i14"><use href="#pen"/></svg></span>
      <span class="xbtn b17 ml6 off"><svg class="i14"><use href="#curve"/></svg></span>
      <span class="xbtn b17"><svg class="i14"><use href="#split"/></svg></span>
    </div>
    <div class="tl-wrap">
      <div class="left">
        <div class="left-tools">
          <span class="xbtn b16"><svg class="i14"><use href="#ad1"/></svg></span>
          <span class="xbtn b16 pressed"><svg class="i14"><use href="#ad2"/></svg></span>
          <span class="xbtn b16 ml7"><svg class="i14"><use href="#ad3"/></svg></span>
          <span class="xbtn b16 ml4"><svg class="i14"><use href="#ad4"/></svg></span>
        </div>
        <div class="tree">
          <div class="row"><span class="minus"></span><svg class="mot"><use href="#motor"/></svg><span>Silniki</span></div>
          <div class="row child"><span class="elbow"></span><span>Silnik 1</span></div>
          <div class="row"></div><div class="row"></div><div class="row"></div><div class="row"></div>
          <div class="sb"><span class="sb-b"></span><span class="sb-t"></span><span class="sb-b rgt"></span></div>
        </div>
      </div>
      <div class="timeline">
        <div class="ruler">
          <span class="mark"></span>
          <div class="rlabels">
            <span>,00</span><span>0,67</span><span>1,33</span><span>2,00</span><span>2,67</span><span>3,33</span><span>4,00</span><span>4,67</span><span>5,33</span><span>6,00</span><span>6,67</span><span>7,33</span><span>8,00</span><span>8,67</span><span>9,33</span><span>10,00</span><span>10,67</span><span>11,33</span><span>12,00</span><span>12,67</span><span>13,33</span><span>14,00</span><span>14,67</span><span class="last">15,33</span>
          </div>
        </div>
        <div class="tracks">
          <div class="row"></div>
          <div class="row trackrow"><div class="bar"></div></div>
          <div class="row"></div><div class="row"></div><div class="row"></div><div class="row"></div>
          <div class="sb sb2"><span class="sb-b"></span><span class="sb-t"></span><span class="sb-rest"></span></div>
        </div>
      </div>
    </div>
  </section>
</div>
</body>
</html>
```

FILE: styles.css
```css
* { box-sizing: border-box; }
html, body { margin: 0; padding: 0; }
body { width: 1024px; height: 619px; overflow: hidden; background: #fff; font-family: "Liberation Sans", Arial, sans-serif; font-size: 8.500px; letter-spacing: -.12px; color: #222; }
.defs { position: absolute; width: 0; height: 0; }
svg { display: block; flex: none; }
.app { position: relative; width: 1024px; height: 619px; display: flex; flex-direction: column; filter: blur(.35px); }

.i11 { width: 11px; height: 11px; } .i12 { width: 12px; height: 12px; } .i13 { width: 13px; height: 13px; } .i14 { width: 14px; height: 14px; } .i18 { width: 18px; height: 18px; }
.ic20 { width: 20px; margin-top: 2px; } .ic24 { width: 24px; margin-top: 3px; } .ic26 { width: 26px; margin-top: 2px; } .ic-cur { width: 14px; margin-top: 4px; margin-bottom: 2px; }
.flip { transform: scaleX(-1); }

.logo { position: absolute; left: 0; top: 0; width: 27px; height: 27px; z-index: 3; }
.titlebar { height: 15px; flex: none; background: linear-gradient(#f4f4f4, #e6e6e6); display: flex; position: relative; }
.qat { display: flex; align-items: center; gap: 4px; padding-left: 34px; width: 150px; height: 15px; }
.qsep { width: 1px; height: 12px; background: #b0b2b6; margin: 0 2px; }
.qdash { color: #999; margin: 0 1px; }
.title { flex: 1; padding-left: 300px; line-height: 13px; color: #8c8c8c; white-space: nowrap; }
.caret { display: inline-block; width: 0; height: 0; border: 2px solid transparent; border-top: 3px solid #666; border-bottom: 0; align-self: center; }
.caret.dark { border-top-color: #444; }
.caret.inl { vertical-align: middle; }

.tabs { height: 18px; flex: none; background: #ced3d9; display: flex; align-items: flex-end; padding-left: 33px; border-top: 1px solid #b4b8bc; }
.tab { height: 16px; line-height: 16px; padding: 0 10.5px; color: #3e4c5c; white-space: nowrap; }
.tab.active { background: linear-gradient(#f2f4f6, #e6eaee); color: #222; border: 1px solid #b8bcc2; border-bottom: 0; padding: 0 6px; margin-right: 3px; border-radius: 2px 2px 0 0; }

.ribbon { height: 67px; flex: none; display: flex; gap: 3px; padding: 3px 0 2px; background: linear-gradient(#fbfcfd, #eef1f3 30%, #f4f6f8); }
.grp { display: flex; flex-direction: column; height: 62px; border: 1px solid #c4c8cc; border-radius: 3px; background: linear-gradient(#f3f4f6, #e8eaed); }
.w52 { width: 52px; } .w98 { width: 98px; } .w53 { width: 53px; } .w144 { width: 144px; } .w109 { width: 109px; } .w120 { width: 120px; } .w71 { width: 71px; } .w22 { width: 22px; } .w40 { width: 40px; }
.body { flex: 1; display: flex; min-height: 0; }
.cap { height: 12px; flex: none; line-height: 12px; text-align: center; color: #4c5662; background: linear-gradient(#e6e9ec, #d0d4d8); white-space: nowrap; overflow: hidden; }
.big { display: flex; flex-direction: column; align-items: center; color: #3c4650; line-height: 10px; white-space: nowrap; }
.big > svg.ic20 { height: 24px; margin-bottom: 2px; } .big > svg.ic24 { height: 23px; margin-bottom: 2px; } .big > svg.ic26 { height: 24px; margin-bottom: 2px; } .big > svg.ic-cur { height: 22px; }
.big .caret { margin-top: 3px; }
.dim { color: #8c9096; }
.bw36 { width: 35px; } .bw38 { width: 38px; } .bw76 { width: 76px; } .bw30 { width: 30px; }
.sm { display: grid; grid-auto-rows: 16px; align-items: center; justify-items: center; }
.sm1 { grid-template-columns: 16px; }
.sm-wyb { grid-template-columns: 16px 16px 9px 16px; }
.sm-mon { grid-template-columns: 17px 17px; }
.sm-rel { grid-template-columns: repeat(5, 16.5px); margin-left: 1px; width: 85px; }
.vsep { border-left: 1px solid #b4b8bc; height: 44px; margin-left: 2px; padding-left: 2px; width: 20px; grid-auto-rows: 15px; align-self: flex-start; margin-top: 2px; }
.sm-lic { grid-template-columns: repeat(4, 16.5px); margin-left: 2px; }
.hot { background: #fbd98e; outline: 1px solid #d8a850; height: 16px; width: 16px; display: flex; align-items: center; justify-content: center; }
.lst { width: 100px; display: flex; flex-direction: column; padding-left: 3px; }
.li { height: 16px; display: flex; align-items: center; gap: 2px; color: #3c4650; white-space: nowrap; }
.li .caret { margin-left: 4px; }
.szyk { flex-direction: column; align-items: center; gap: 7px; padding-top: 6px; }
.conf { flex: 1; padding: 6px 0 0 1px; }
.conf-top { display: flex; gap: 2px; align-items: center; }
.rcombo { width: 95px; height: 16px; display: flex; align-items: center; justify-content: space-between; padding: 0 5px 0 2px; background: #eef0f2; border: 1px solid #c8ccd0; color: #222; white-space: nowrap; }
.rbtn { width: 16px; height: 16px; background: #f8f8f6; display: flex; align-items: center; justify-content: center; }
.conf-row { display: flex; gap: 2.800px; margin-top: 5px; height: 16px; padding-left: 2px; align-items: center; }

.rule { height: 2px; flex: none; background: #a8a6a2; }

.main { height: 368px; flex: none; display: flex; }
.side { width: 187px; flex: none; background: #d4d0c8; border-right: 1px solid #55565a; display: flex; flex-direction: column; }
.side-head { height: 15px; flex: none; padding: 0 8px 0 0; display: flex; justify-content: space-between; align-items: center; background: linear-gradient(#e6edf5, #d0dce8); }
.side-title { font-weight: bold; color: #1c5c9c; font-size: 9px; }
.side-ctl { display: flex; align-items: center; gap: 6px; color: #333; }
.pin { font-size: 8px; } .closex { font-size: 11px; line-height: 10px; }
.side-tabs { height: 22px; flex: none; display: flex; align-items: center; gap: 6.500px; padding-left: 2px; background: #e8ecf0; }
.side-tab { background: #fff; height: 20px; width: 20px; display: flex; align-items: center; justify-content: center; margin: 0 -1px; }
.side-tools { height: 20px; flex: none; display: flex; align-items: center; gap: 1px; background: #d4d0c8; }
.tgap { width: 55px; } .tgap2 { width: 1px; }
.side-combo { width: 181px; height: 16px; margin-top: 2px; flex: none; }
.side-combo .combo-txt { padding-left: 2px; }
.files { list-style: none; margin: 3px 0 0; width: 182px; height: 142px; flex: none; padding: 1px 0 0; background: #fff; border-top: 1px solid #55565a; }
.files li { height: 12.800px; display: flex; align-items: center; gap: 0; white-space: nowrap; }
.fi { width: 11px; height: 12px; }
.sel { background: #d8d8d8; }
.preview { width: 182px; flex: 1; margin-top: 0; background: #fff; border-top: 2px solid #707070; margin-bottom: 2px; }

.view { position: relative; flex: 1; background: linear-gradient(#333 0, #333 2px, #505050 2px, #fff); overflow: hidden; }
.scene { position: absolute; left: 0; top: 0; }
.ax { font: 12px "Liberation Sans", sans-serif; }
.az { fill: #1018c8; } .ax-x { fill: #d02020; } .ay { fill: #20b030; }

.dlg { position: absolute; left: 172px; top: 91px; width: 348px; height: 260px; background: #d4d0c8; border: 1px solid; border-color: #e8e6e0 #404040 #404040 #e8e6e0; box-shadow: inset 1px 1px #fff, inset -1px -1px #808080; padding: 2px; display: flex; flex-direction: column; }
.dlg-title { height: 14px; flex: none; display: flex; align-items: center; gap: 2px; padding: 0 2px; background: linear-gradient(90deg, #0a246a, #a6caf0); }
.dlg-name { flex: 1; color: #fff; font-weight: bold; font-size: 9px; letter-spacing: .1px; }
.dlg-x { width: 13px; height: 12px; line-height: 11px; text-align: center; font-size: 13px; color: #111; background: #d4d0c8; border: 1px solid; border-color: #fff #404040 #404040 #fff; }
.dlg-body { flex: 1; display: flex; flex-direction: column; padding: 7px 4px 0 6px; }
.dlg-top { display: flex; align-items: center; gap: 1px; height: 17px; padding-left: 4px; }
.lab-w { width: 35px; margin-right: 4px; white-space: nowrap; }
.combo { display: flex; align-items: center; background: #fff; border: 1px solid; border-color: #808080 #fff #fff #808080; box-shadow: inset 1px 1px #404040; padding: 1px 0 0 1px; }
.combo-txt { flex: 1; padding-left: 1px; white-space: nowrap; overflow: hidden; }
.t2, .t3 { padding-left: 1px; }
.arr { width: 12px; height: 12px; flex: none; margin-right: 1px; position: relative; background: #d4d0c8; border: 1px solid; border-color: #fff #404040 #404040 #fff; display: flex; align-items: center; justify-content: center; }
.arr::after { content: ""; border: 3px solid transparent; border-top: 4px solid #111; border-bottom: 0; }
.dlg-combo { width: 138px; height: 16px; margin-right: 6px; padding-left: 3px; }
.dlg-list { height: 130px; flex: none; margin: 6px 1px 0 1px; background: #fff; border: 1px solid; border-color: #606060 #fff #fff #606060; box-shadow: inset 1px 1px #808080; }
.dlg-row { display: flex; align-items: center; }
.r-name { height: 17px; margin-top: 7px; }
.r-type { height: 18px; margin-top: 5px; }
.r-opt { height: 17px; margin-top: 8px; padding-left: 59px; }
.lab { width: 62px; white-space: nowrap; flex: none; }
.field { width: 212px; height: 15px; background: #fff; border: 1px solid; border-color: #606060 #fff #fff #606060; }
.type { width: 212px; height: 15px; }
.btn { width: 50px; height: 100%; margin: 0 0 0 auto; padding: 0; font: inherit; letter-spacing: inherit; color: #222; background: #d4d0c8; border: 1px solid; border-color: #fff #404040 #404040 #fff; box-shadow: inset -1px -1px #808080; }
.btn.opt { margin: 0; }
.xbtn { height: 17px; display: inline-flex; align-items: center; justify-content: center; background: #d4d0c8; border: 1px solid; border-color: #f4f2ee #808080 #808080 #f4f2ee; flex: none; }
.b12 { width: 12px; } .b15 { width: 16px; height: 17px; } .b16 { width: 16.500px; } .b17 { width: 17.500px; } .b18 { width: 18.500px; height: 18px; } .b22 { width: 22px; } .b24 { width: 24px; }
.mini { width: 0; height: 0; border: 2px solid transparent; border-top: 3px solid #222; border-bottom: 0; margin-left: 2px; }

.bottom { height: 149px; flex: none; display: flex; flex-direction: column; background: #d4d0c8; }
.tb { height: 27px; flex: none; display: flex; align-items: center; padding: 2px 0 0 2px; gap: 1px; border-top: 2px solid #f4f4f2; white-space: nowrap; color: #444; }
.anim { width: 87px; height: 16px; }
.speed { width: 39px; height: 16px; margin-left: 1px; }
.ml4 { margin-left: 3px; } .ml5 { margin-left: 4px; } .ml6 { margin-left: 5px; } .ml7 { margin-left: 6px; } .ml9 { margin-left: 8px; }
.tg { display: inline-flex; gap: 1.500px; }
.tr { width: 13px; height: 9px; }
.ro { height: 16px; line-height: 14px; padding-left: 1px; border: 1px solid; border-color: #808080 #fff #fff #808080; font-size: 10px; letter-spacing: 0; color: #333; }
.w48 { width: 47px; margin-left: 2px; }
.rbtn2 { width: 17px; height: 18px; background: #f8f8f4; display: flex; align-items: center; justify-content: center; }
.off { opacity: .75; }
.pressed { border-color: #404040 #fff #fff #404040; background: #e8e6e0; }

.tl-wrap { flex: 1; display: flex; min-height: 0; }
.left { width: 155px; flex: none; display: flex; flex-direction: column; }
.left-tools { height: 27px; flex: none; display: flex; align-items: flex-start; padding: 1px 0 0 5px; gap: 1px; }
.tree { flex: 1; width: 146px; margin-left: 2px; background: #fff; border: 1px solid; border-color: #606060 #fff #fff #606060; border-bottom: 0; display: flex; flex-direction: column; min-height: 0; }
.row { height: 13.400px; flex: none; display: flex; align-items: center; border-bottom: 1px solid #e4e2dc; color: #333; }
.minus { width: 8px; height: 8px; margin: 0 1px 0 4px; border: 1px solid #777; position: relative; background: #fff; }
.minus::after { content: ""; position: absolute; left: 1px; top: 2px; width: 4px; height: 1px; background: #333; }
.mot { width: 13px; height: 11px; margin-right: 3px; }
.child { padding-left: 20px; }
.elbow { width: 8px; height: 9px; margin: -9px 1px 0 0; border-left: 1px solid #aaa; border-bottom: 1px solid #aaa; }
.sb { height: 6px; margin-top: auto; display: flex; overflow: hidden; background: #d4d0c8; }
.sb-b { width: 14px; height: 10px; flex: none; display: flex; justify-content: center; padding-top: 1px; background: #d4d0c8; border: 1px solid; border-color: #fff #606060 #606060 #fff; }
.sb-b::after { content: ""; width: 0; height: 0; border: 3px solid transparent; border-right: 3px solid #111; border-left: 0; }
.sb-b.rgt::after { border-right: 0; border-left: 3px solid #111; }
.sb-t { flex: none; width: 710px; }
.tree .sb-t { flex: 1; width: auto; }
.timeline { flex: 1; min-width: 0; display: flex; flex-direction: column; background: #fff; border-left: 1px solid #1818b0; border-top: 2px solid #6c6c68; }
.ruler { height: 25px; flex: none; position: relative; overflow: hidden; border-bottom: 2px solid #555; background:
  linear-gradient(90deg, #555 1px, transparent 1px) 1px 8px / 37px 7px repeat-x,
  linear-gradient(90deg, #aaa 1px, transparent 1px) 1px 8px / 3.700px 3px repeat-x,
  linear-gradient(#888, #888) 0 8px / 100% 1px no-repeat,
  #fff; }
.mark { position: absolute; left: 1px; top: 1px; width: 1px; height: 13px; background: #333; }
.rlabels { display: flex; padding: 12px 0 0 1px; color: #333; font-size: 7.500px; line-height: 10px; letter-spacing: -.15px; }
.rlabels span { width: 37px; flex: none; }
.rlabels .last { width: 17px; margin-left: -1px; letter-spacing: -.3px; white-space: nowrap; }
.tracks { flex: 1; display: flex; flex-direction: column; min-height: 0; border-left: 1px solid #1818b0; }
.tracks .row { height: 13.400px; }
.trackrow { padding-left: 2px; border-bottom: 0; }
.bar { flex: 1; height: 12px; background: linear-gradient(#222, #777 12%, #c8c8c8 25%, #eee 45%, #bbb 65%, #888 85%, #222); border-left: 2px solid #1818c8; }
.sb2 { margin-top: auto; }
.sb-rest { flex: 1; background: #f0efec; border-left: 1px solid #555; }
```
